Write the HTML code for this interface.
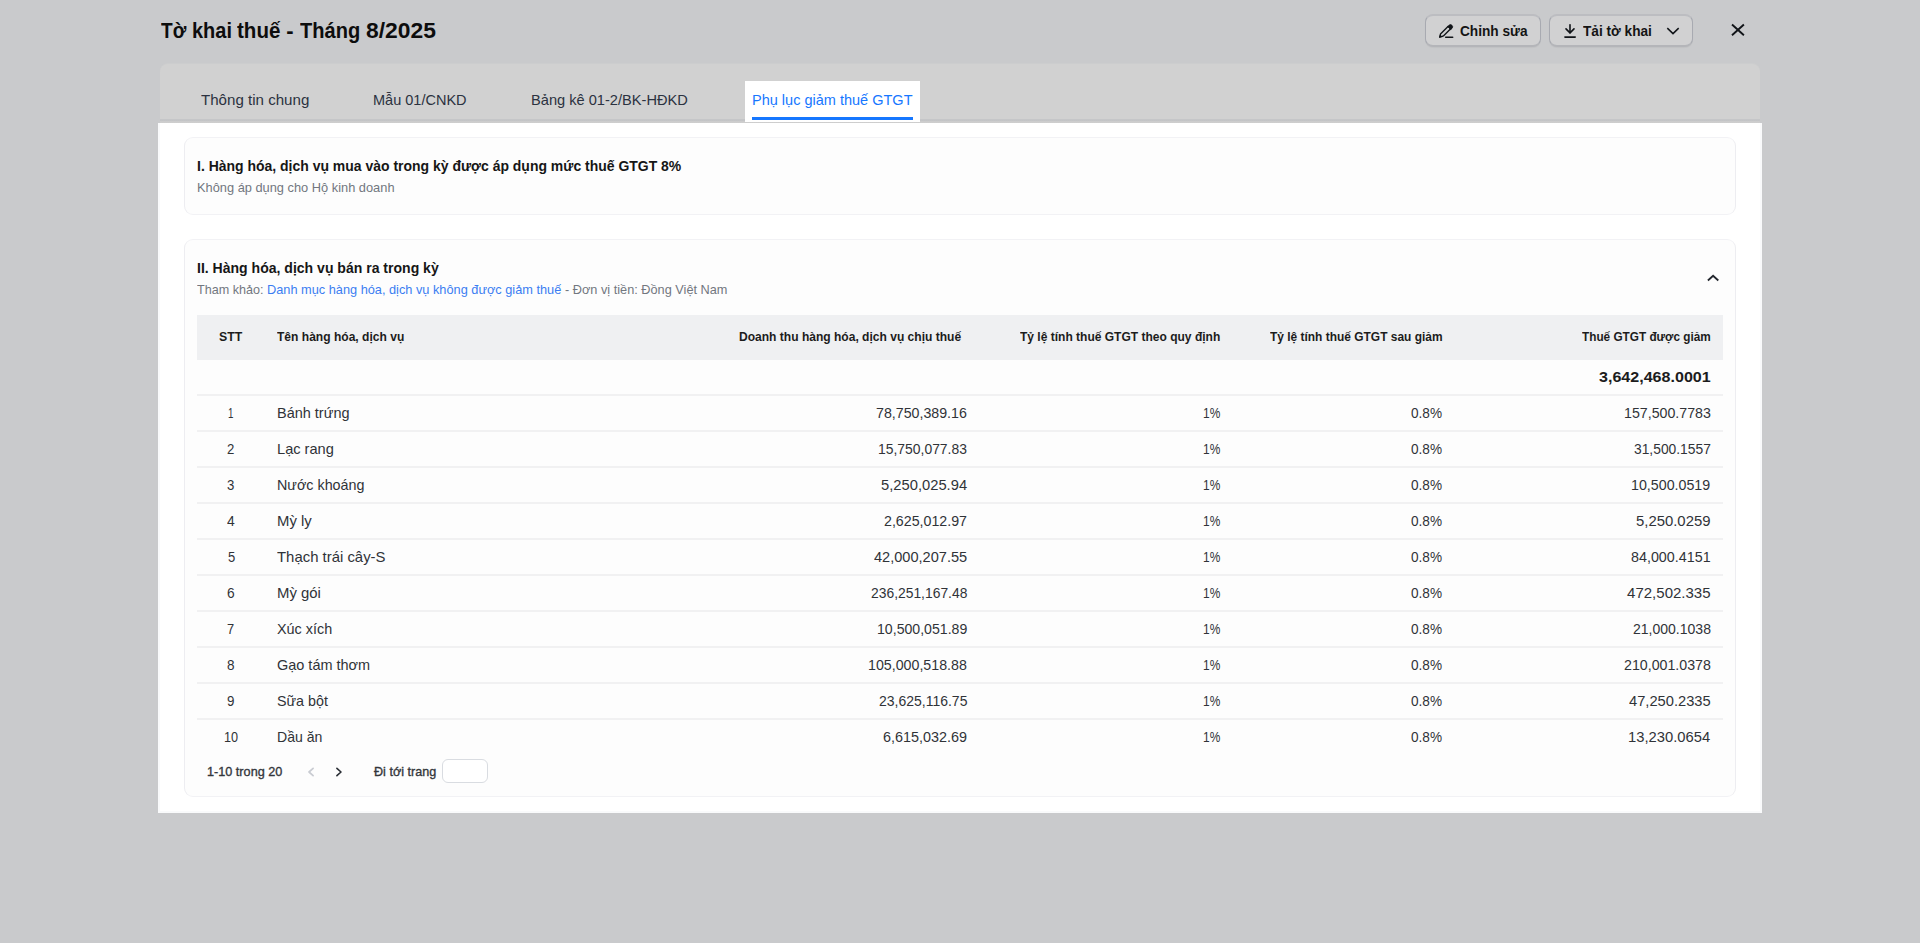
<!DOCTYPE html>
<html lang="vi"><head><meta charset="utf-8"><title>Tờ khai thuế - Tháng 8/2025</title>
<style>
*{box-sizing:border-box;margin:0;padding:0}
h1{font-size:inherit;font-weight:inherit}
html,body{width:1920px;height:943px;overflow:hidden;background:#c9cacc}
body{font-family:"Liberation Sans",sans-serif;position:relative;color:#222}
.t{position:absolute;white-space:nowrap;line-height:20px;height:20px;font-weight:400;transform-origin:0 0}
.abs{position:absolute}
.btn{position:absolute;top:14px;height:33px;border:1px solid #a8aab1;border-top:2px solid #bcbdc1;border-bottom:2px solid #b4b5b9;border-radius:8px;background:#d1d1d2;box-shadow:0 1px 1px rgba(0,0,0,.04)}
.tabs{position:absolute;left:160px;top:64px;width:1600px;height:59px;background:#d1d1d1;border-radius:8px 8px 0 0;box-shadow:0 -1px 0 rgba(209,209,209,.45)}
.tabs:after{content:"";position:absolute;left:0;right:0;bottom:0;height:4px;background:linear-gradient(#c6c7c9 0,#c3c4c6 50%,#cccccd 50%,#cecece 100%)}
.tab-active{position:absolute;left:745px;top:81px;width:175px;height:41px;background:#fff}
.tab-line{position:absolute;left:752px;top:117px;width:161px;height:3px;background:linear-gradient(#1677ff 0,#1677ff 85%,#8dbcff 100%)}
.content{position:absolute;left:158px;top:123px;width:1604px;height:690px;background:#fff;box-shadow:inset 2px 0 0 #f9fafb,inset -2px 0 0 #f9fafb,inset 0 -2px 0 #f9fafb}
.card{position:absolute;left:184px;width:1552px;border:1px solid #ededf1;border-top-color:#f2f2f5;border-bottom-color:#f2f2f5;border-radius:9px;background:#fdfdfd}
.thead{position:absolute;left:197px;top:315px;width:1526px;height:44.5px;background:#eff0f2}
.hr{position:absolute;left:197px;width:1526px;height:2px;background:#f1f1f2}
.inp{position:absolute;left:442px;top:759px;width:46px;height:24px;border:1px solid #d9dce1;border-radius:6px;background:#fff}
svg{position:absolute;overflow:visible}
</style></head><body>

<header>
<h1><span class="t" style="left:161.10px;top:20.75px;font-size:22px;transform:scaleX(0.8694);font-weight:700;color:#0d0d0d;">Tờ</span> <span class="t" style="left:191.70px;top:20.75px;font-size:22px;transform:scaleX(0.9091);font-weight:700;color:#0d0d0d;">khai</span> <span class="t" style="left:236.60px;top:20.75px;font-size:22px;transform:scaleX(0.9333);font-weight:700;color:#0d0d0d;">thuế</span> <span class="t" style="left:286.30px;top:20.75px;font-size:22px;font-weight:700;color:#0d0d0d;">-</span> <span class="t" style="left:299.80px;top:20.75px;font-size:22px;transform:scaleX(0.9121);font-weight:700;color:#0d0d0d;">Tháng</span> <span class="t" style="left:366.30px;top:20.75px;font-size:22px;transform:scaleX(1.0394);font-weight:700;color:#0d0d0d;">8/2025</span></h1>
<div class="btn" style="left:1425px;width:116px"></div>
<div class="btn" style="left:1549px;width:144px"></div>
<svg style="left:1436px;top:22px" width="20" height="20" viewBox="0 0 20 20" fill="none" stroke="#111418" stroke-width="1.35" stroke-linejoin="round"><path d="M7.4 14.0L3.7 15.2l.8-3.2 8-8M7.4 14.0l8-8"/><path d="M3.7 15.2l.5-2 1.5 1.4z" fill="#111418" stroke-width=".8"/><path d="M11.6 4.6l1.4-1.4a2.2 2.2 0 0 1 3.1 3.1l-1.4 1.4z" fill="#111418" stroke-width=".8"/><path d="M9.7 15.25h7" stroke-width="1.5" stroke-linecap="round"/></svg>
<span class="t" style="left:1459.90px;top:20.50px;font-size:15px;transform:scaleX(0.9113);font-weight:700;color:#141414;">Chỉnh sửa</span>
<svg style="left:1562px;top:23px" width="16" height="16" viewBox="0 0 16 16" fill="none" stroke="#111418" stroke-width="1.6" stroke-linecap="round" stroke-linejoin="round"><path d="M8 1.8v8"/><path d="M4 5.9l4 4 4-4"/><path d="M2.9 14.1h10.3"/></svg>
<span class="t" style="left:1582.50px;top:20.50px;font-size:15px;transform:scaleX(0.9102);font-weight:700;color:#141414;">Tải tờ khai</span>
<svg style="left:1666px;top:26px" width="14" height="10" viewBox="0 0 14 10" fill="none" stroke="#111418" stroke-width="1.5" stroke-linejoin="miter"><path d="M1.3 2.1L7 7.6l5.7-5.5"/></svg>
<svg style="left:1731px;top:23px" width="14" height="14" viewBox="0 0 14 14" fill="none" stroke="#111418" stroke-width="1.9"><path d="M1 1.5l11.9 10.8M12.9 1.5L1 12.3"/></svg>
</header>
<nav class="tabs"></nav>
<div class="content"></div>
<div class="tab-active"></div><div class="tab-line"></div>
<span class="t" style="left:200.70px;top:89.50px;font-size:15px;transform:scaleX(1.0065);color:#2b3240;">Thông tin chung</span>
<span class="t" style="left:372.80px;top:89.50px;font-size:15px;transform:scaleX(0.9679);color:#2b3240;">Mẫu 01/CNKD</span>
<span class="t" style="left:530.50px;top:89.50px;font-size:15px;transform:scaleX(0.9745);color:#2b3240;">Bảng kê 01-2/BK-HĐKD</span>
<span class="t" style="left:751.80px;top:89.50px;font-size:15px;transform:scaleX(0.9675);color:#1677ff;">Phụ lục giảm thuế GTGT</span>
<section class="card" style="top:137px;height:77.5px"></section>
<span class="t" style="left:197.00px;top:155.75px;font-size:15px;transform:scaleX(0.9314);font-weight:700;color:#161616;">I. Hàng hóa, dịch vụ mua vào trong kỳ được áp dụng mức thuế GTGT 8%</span>
<span class="t" style="left:197.00px;top:178.00px;font-size:13.5px;transform:scaleX(0.9500);color:#72777f;">Không áp dụng cho Hộ kinh doanh</span>
<section class="card" style="top:239px;height:558px"></section>
<span class="t" style="left:197.00px;top:258.25px;font-size:15px;transform:scaleX(0.9356);font-weight:700;color:#161616;">II. Hàng hóa, dịch vụ bán ra trong kỳ</span>
<span class="t" style="left:197.00px;top:279.75px;font-size:13.5px;transform:scaleX(0.9327);color:#72777f;">Tham khảo:</span>
<span class="t" style="left:267.00px;top:279.75px;font-size:13.5px;transform:scaleX(0.9452);color:#3b7df2;">Danh mục hàng hóa, dịch vụ không được giảm thuế</span>
<span class="t" style="left:565.00px;top:279.75px;font-size:13.5px;transform:scaleX(0.9437);color:#72777f;">- Đơn vị tiền: Đồng Việt Nam</span>
<svg style="left:1706px;top:273px" width="14" height="10" viewBox="0 0 14 10" fill="none" stroke="#23272e" stroke-width="1.8" stroke-linejoin="miter"><path d="M1.9 7.5L7.1 2.8l5.2 4.7"/></svg>
<div class="thead"></div>
<span class="t" style="left:218.75px;top:326.75px;font-size:13.5px;transform:scaleX(0.9118);font-weight:700;color:#1c1c1c;">STT</span>
<span class="t" style="left:276.50px;top:326.75px;font-size:13.5px;transform:scaleX(0.8930);font-weight:700;color:#1c1c1c;">Tên hàng hóa, dịch vụ</span>
<span class="t" style="left:739.00px;top:326.75px;font-size:13.5px;transform:scaleX(0.8922);font-weight:700;color:#1c1c1c;">Doanh thu hàng hóa, dịch vụ chịu thuế</span>
<span class="t" style="left:1020.25px;top:326.75px;font-size:13.5px;transform:scaleX(0.8900);font-weight:700;color:#1c1c1c;">Tỷ lệ tính thuế GTGT theo quy định</span>
<span class="t" style="left:1269.50px;top:326.75px;font-size:13.5px;transform:scaleX(0.8846);font-weight:700;color:#1c1c1c;">Tỷ lệ tính thuế GTGT sau giảm</span>
<span class="t" style="left:1582.00px;top:326.75px;font-size:13.5px;transform:scaleX(0.8723);font-weight:700;color:#1c1c1c;">Thuế GTGT được giảm</span>
<span class="t" style="left:1599.00px;top:366.50px;font-size:15px;transform:scaleX(1.0714);font-weight:700;color:#1c1c1c;">3,642,468.0001</span>
<div class="hr" style="top:394px"></div>
<span class="t" style="left:228.20px;top:402.50px;font-size:15px;transform:scaleX(0.6506);color:#303338;">1</span>
<span class="t" style="left:277.10px;top:402.50px;font-size:15px;transform:scaleX(0.9654);color:#303338;">Bánh trứng</span>
<span class="t" style="left:876.20px;top:402.50px;font-size:15px;transform:scaleX(0.9468);color:#303338;">78,750,389.16</span>
<span class="t" style="left:1202.75px;top:402.50px;font-size:15px;transform:scaleX(0.7949);color:#303338;">1%</span>
<span class="t" style="left:1410.75px;top:402.50px;font-size:15px;transform:scaleX(0.9064);color:#303338;">0.8%</span>
<span class="t" style="left:1623.60px;top:402.50px;font-size:15px;transform:scaleX(0.9466);color:#303338;">157,500.7783</span>
<div class="hr" style="top:430px"></div>
<span class="t" style="left:227.40px;top:438.50px;font-size:15px;transform:scaleX(0.8795);color:#303338;">2</span>
<span class="t" style="left:277.10px;top:438.50px;font-size:15px;transform:scaleX(0.9743);color:#303338;">Lạc rang</span>
<span class="t" style="left:878.10px;top:438.50px;font-size:15px;transform:scaleX(0.9270);color:#303338;">15,750,077.83</span>
<span class="t" style="left:1202.75px;top:438.50px;font-size:15px;transform:scaleX(0.7949);color:#303338;">1%</span>
<span class="t" style="left:1410.75px;top:438.50px;font-size:15px;transform:scaleX(0.9064);color:#303338;">0.8%</span>
<span class="t" style="left:1633.70px;top:438.50px;font-size:15px;transform:scaleX(0.9209);color:#303338;">31,500.1557</span>
<div class="hr" style="top:466px"></div>
<span class="t" style="left:227.40px;top:474.50px;font-size:15px;transform:scaleX(0.8795);color:#303338;">3</span>
<span class="t" style="left:277.10px;top:474.50px;font-size:15px;transform:scaleX(0.9552);color:#303338;">Nước khoáng</span>
<span class="t" style="left:880.90px;top:474.50px;font-size:15px;transform:scaleX(0.9829);color:#303338;">5,250,025.94</span>
<span class="t" style="left:1202.75px;top:474.50px;font-size:15px;transform:scaleX(0.7949);color:#303338;">1%</span>
<span class="t" style="left:1410.75px;top:474.50px;font-size:15px;transform:scaleX(0.9064);color:#303338;">0.8%</span>
<span class="t" style="left:1631.30px;top:474.50px;font-size:15px;transform:scaleX(0.9496);color:#303338;">10,500.0519</span>
<div class="hr" style="top:502px"></div>
<span class="t" style="left:227.20px;top:510.50px;font-size:15px;transform:scaleX(0.9277);color:#303338;">4</span>
<span class="t" style="left:277.10px;top:510.50px;font-size:15px;transform:scaleX(0.9914);color:#303338;">Mỳ ly</span>
<span class="t" style="left:884.00px;top:510.50px;font-size:15px;transform:scaleX(0.9475);color:#303338;">2,625,012.97</span>
<span class="t" style="left:1202.75px;top:510.50px;font-size:15px;transform:scaleX(0.7949);color:#303338;">1%</span>
<span class="t" style="left:1410.75px;top:510.50px;font-size:15px;transform:scaleX(0.9064);color:#303338;">0.8%</span>
<span class="t" style="left:1636.00px;top:510.50px;font-size:15px;transform:scaleX(0.9920);color:#303338;">5,250.0259</span>
<div class="hr" style="top:538px"></div>
<span class="t" style="left:227.50px;top:546.50px;font-size:15px;transform:scaleX(0.8675);color:#303338;">5</span>
<span class="t" style="left:277.10px;top:546.50px;font-size:15px;transform:scaleX(0.9936);color:#303338;">Thạch trái cây-S</span>
<span class="t" style="left:873.90px;top:546.50px;font-size:15px;transform:scaleX(0.9708);color:#303338;">42,000,207.55</span>
<span class="t" style="left:1202.75px;top:546.50px;font-size:15px;transform:scaleX(0.7949);color:#303338;">1%</span>
<span class="t" style="left:1410.75px;top:546.50px;font-size:15px;transform:scaleX(0.9064);color:#303338;">0.8%</span>
<span class="t" style="left:1630.90px;top:546.50px;font-size:15px;transform:scaleX(0.9544);color:#303338;">84,000.4151</span>
<div class="hr" style="top:574px"></div>
<span class="t" style="left:227.10px;top:582.50px;font-size:15px;transform:scaleX(0.9157);color:#303338;">6</span>
<span class="t" style="left:277.10px;top:582.50px;font-size:15px;transform:scaleX(0.9932);color:#303338;">Mỳ gói</span>
<span class="t" style="left:870.60px;top:582.50px;font-size:15px;transform:scaleX(0.9243);color:#303338;">236,251,167.48</span>
<span class="t" style="left:1202.75px;top:582.50px;font-size:15px;transform:scaleX(0.7949);color:#303338;">1%</span>
<span class="t" style="left:1410.75px;top:582.50px;font-size:15px;transform:scaleX(0.9064);color:#303338;">0.8%</span>
<span class="t" style="left:1627.10px;top:582.50px;font-size:15px;color:#303338;">472,502.335</span>
<div class="hr" style="top:610px"></div>
<span class="t" style="left:227.40px;top:618.50px;font-size:15px;transform:scaleX(0.8554);color:#303338;">7</span>
<span class="t" style="left:277.10px;top:618.50px;font-size:15px;transform:scaleX(0.9583);color:#303338;">Xúc xích</span>
<span class="t" style="left:876.70px;top:618.50px;font-size:15px;transform:scaleX(0.9416);color:#303338;">10,500,051.89</span>
<span class="t" style="left:1202.75px;top:618.50px;font-size:15px;transform:scaleX(0.7949);color:#303338;">1%</span>
<span class="t" style="left:1410.75px;top:618.50px;font-size:15px;transform:scaleX(0.9064);color:#303338;">0.8%</span>
<span class="t" style="left:1632.60px;top:618.50px;font-size:15px;transform:scaleX(0.9341);color:#303338;">21,000.1038</span>
<div class="hr" style="top:646px"></div>
<span class="t" style="left:227.20px;top:654.50px;font-size:15px;transform:scaleX(0.9036);color:#303338;">8</span>
<span class="t" style="left:277.10px;top:654.50px;font-size:15px;transform:scaleX(0.9648);color:#303338;">Gạo tám thơm</span>
<span class="t" style="left:868.10px;top:654.50px;font-size:15px;transform:scaleX(0.9482);color:#303338;">105,000,518.88</span>
<span class="t" style="left:1202.75px;top:654.50px;font-size:15px;transform:scaleX(0.7949);color:#303338;">1%</span>
<span class="t" style="left:1410.75px;top:654.50px;font-size:15px;transform:scaleX(0.9064);color:#303338;">0.8%</span>
<span class="t" style="left:1623.60px;top:654.50px;font-size:15px;transform:scaleX(0.9466);color:#303338;">210,001.0378</span>
<div class="hr" style="top:682px"></div>
<span class="t" style="left:227.20px;top:690.50px;font-size:15px;transform:scaleX(0.8916);color:#303338;">9</span>
<span class="t" style="left:277.10px;top:690.50px;font-size:15px;transform:scaleX(0.9532);color:#303338;">Sữa bột</span>
<span class="t" style="left:878.60px;top:690.50px;font-size:15px;transform:scaleX(0.9325);color:#303338;">23,625,116.75</span>
<span class="t" style="left:1202.75px;top:690.50px;font-size:15px;transform:scaleX(0.7949);color:#303338;">1%</span>
<span class="t" style="left:1410.75px;top:690.50px;font-size:15px;transform:scaleX(0.9064);color:#303338;">0.8%</span>
<span class="t" style="left:1628.80px;top:690.50px;font-size:15px;transform:scaleX(0.9796);color:#303338;">47,250.2335</span>
<div class="hr" style="top:718px"></div>
<span class="t" style="left:223.80px;top:726.50px;font-size:15px;transform:scaleX(0.8443);color:#303338;">10</span>
<span class="t" style="left:277.10px;top:726.50px;font-size:15px;transform:scaleX(0.9380);color:#303338;">Dầu ăn</span>
<span class="t" style="left:883.00px;top:726.50px;font-size:15px;transform:scaleX(0.9589);color:#303338;">6,615,032.69</span>
<span class="t" style="left:1202.75px;top:726.50px;font-size:15px;transform:scaleX(0.7949);color:#303338;">1%</span>
<span class="t" style="left:1410.75px;top:726.50px;font-size:15px;transform:scaleX(0.9064);color:#303338;">0.8%</span>
<span class="t" style="left:1628.40px;top:726.50px;font-size:15px;transform:scaleX(0.9844);color:#303338;">13,230.0654</span>
<span class="t" style="left:206.90px;top:761.75px;font-size:13.5px;transform:scaleX(0.9377);color:#33363b;-webkit-text-stroke:.35px #33363b;">1-10 trong 20</span>
<svg style="left:306px;top:765px" width="10" height="14" viewBox="0 0 10 14" fill="none" stroke="#c9ccd2" stroke-width="1.7" stroke-linecap="round" stroke-linejoin="round"><path d="M7.1 3.3L3 7l4.1 3.7"/></svg>
<svg style="left:334px;top:765px" width="10" height="14" viewBox="0 0 10 14" fill="none" stroke="#2a2e35" stroke-width="1.6" stroke-linecap="round" stroke-linejoin="round"><path d="M2.9 3.3L7 7l-4.1 3.7"/></svg>
<span class="t" style="left:373.70px;top:761.75px;font-size:13.5px;transform:scaleX(0.9339);color:#33363b;-webkit-text-stroke:.35px #33363b;">Đi tới trang</span>
<div class="inp"></div>
</body></html>
